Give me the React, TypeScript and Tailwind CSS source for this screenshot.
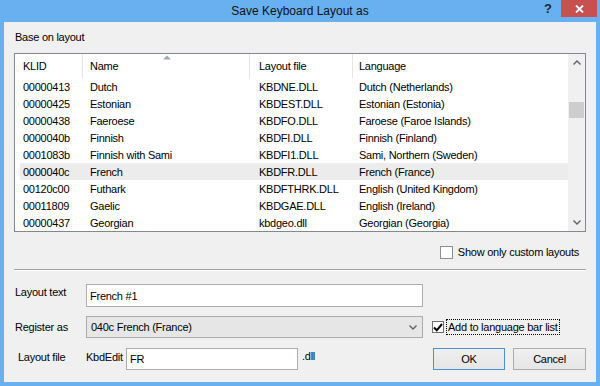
import React from "react";

const rows: [string, string, string, string][] = [
  ["00000413", "Dutch", "KBDNE.DLL", "Dutch (Netherlands)"],
  ["00000425", "Estonian", "KBDEST.DLL", "Estonian (Estonia)"],
  ["00000438", "Faeroese", "KBDFO.DLL", "Faroese (Faroe Islands)"],
  ["0000040b", "Finnish", "KBDFI.DLL", "Finnish (Finland)"],
  ["0001083b", "Finnish with Sami", "KBDFI1.DLL", "Sami, Northern (Sweden)"],
  ["0000040c", "French", "KBDFR.DLL", "French (France)"],
  ["00120c00", "Futhark", "KBDFTHRK.DLL", "English (United Kingdom)"],
  ["00011809", "Gaelic", "KBDGAE.DLL", "English (Ireland)"],
  ["00000437", "Georgian", "kbdgeo.dll", "Georgian (Georgia)"],
];

function Chevron({ up }: { up?: boolean }) {
  return (
    <svg width="8" height="5" viewBox="0 0 8 5">
      <polyline
        points={up ? "0.5,4.5 4,1 7.5,4.5" : "0.5,0.5 4,4 7.5,0.5"}
        fill="none"
        stroke="#606060"
        strokeWidth="1.4"
      />
    </svg>
  );
}

export default function App() {
  return (
    <div className="w-[600px] h-[386px] bg-[#68b0f0] flex flex-col font-['Liberation_Sans',Arial,sans-serif] text-black">
      {/* Title bar */}
      <div className="relative h-[22px] flex items-center justify-center text-[12px] text-[#111]">
        <span className="leading-[14px]">Save Keyboard Layout as</span>
        <div className="absolute right-[3px] top-0 flex items-start">
          <div className="w-[26px] h-[17px] flex items-center justify-center text-[13px] font-bold text-[#1a2a3a]">
            ?
          </div>
          <div className="w-[36px] h-[17px] bg-[#c75050] flex items-center justify-center">
            <svg width="9" height="8" viewBox="0 0 9 8">
              <path d="M1 0.5 L8 7.5 M8 0.5 L1 7.5" stroke="#fff" strokeWidth="1.8" />
            </svg>
          </div>
        </div>
      </div>

      {/* Client area */}
      <div className="flex-1 mx-[4px] mb-[4px] bg-[#f0f0f0] px-[10px] flex flex-col text-[11px] tracking-[-0.25px]">
        <div className="h-[31px] pt-[9px] pl-[1px] leading-[13px]">Base on layout</div>

        {/* List view */}
        <div className="h-[179px] border border-[#828790] bg-white flex">
          <div className="flex-1 flex flex-col overflow-hidden">
            <div className="h-[24px] flex items-center">
              <div className="w-[68px] h-full pl-[8px] flex items-center border-r border-[#e5e5e5]">KLID</div>
              <div className="relative w-[167px] h-full pl-[7px] flex items-center border-r border-[#e5e5e5]">
                Name
                <svg className="absolute left-[80px] top-[1px]" width="8" height="5" viewBox="0 0 8 5">
                  <polygon points="0,4.5 4,0.5 8,4.5" fill="#9aabbd" />
                </svg>
              </div>
              <div className="w-[103px] h-full pl-[9px] flex items-center border-r border-[#e5e5e5]">Layout file</div>
              <div className="flex-1 h-full pl-[6px] flex items-center">Language</div>
            </div>
            {rows.map((r, i) => (
              <div key={r[0]} className="h-[17px] flex pl-[5px]">
                <div
                  className={
                    "flex-1 flex items-center leading-[17px] pt-[1px] whitespace-nowrap " +
                    (i === 5 ? "bg-[#ececec]" : "")
                  }
                >
                  <div className="w-[63px] pl-[3px]">{r[0]}</div>
                  <div className="w-[167px] pl-[7px]">{r[1]}</div>
                  <div className="w-[103px] pl-[9px]">{r[2]}</div>
                  <div className="flex-1 pl-[6px]">{r[3]}</div>
                </div>
              </div>
            ))}
          </div>
          <div className="w-[17px] bg-[#f0f0f0] flex flex-col">
            <div className="h-[17px] flex items-center justify-center">
              <Chevron up />
            </div>
            <div className="flex-1 flex flex-col">
              <div className="mt-[31px] mx-[1px] h-[16px] bg-[#cdcdcd]" />
            </div>
            <div className="h-[17px] flex items-center justify-center">
              <Chevron />
            </div>
          </div>
        </div>

        {/* Show only custom layouts */}
        <div className="mt-[13px] h-[14px] flex items-center justify-end pr-[7px]">
          <div className="w-[13px] h-[13px] border border-[#8f8f8f] bg-white" />
          <span className="ml-[5px] leading-[13px]">Show only custom layouts</span>
        </div>

        {/* Separator */}
        <div className="mt-[10px] h-0 border-t border-b border-t-[#a0a0a0] border-b-white" />

        {/* Layout text */}
        <div className="mt-[13px] h-[23px] flex items-start">
          <div className="w-[72px] pl-[1px] mt-[2px] leading-[13px]">Layout text</div>
          <div className="w-[337px] h-[23px] border border-[#abadb3] bg-white pl-[3px] flex items-center pt-[1px]">
            French #1
          </div>
        </div>

        {/* Register as */}
        <div className="mt-[9px] h-[22px] flex items-start">
          <div className="w-[72px] pl-[1px] mt-[5px] leading-[13px]">Register as</div>
          <div className="w-[337px] h-[22px] border border-[#acacac] bg-[#e6e6e6] pl-[4px] pr-[5px] flex items-center justify-between">
            <span>040c French (France)</span>
            <Chevron />
          </div>
          <div className="ml-[9px] h-[22px] flex items-center">
            <div className="w-[12px] h-[12px] border border-[#707070] bg-white flex items-center justify-center">
              <svg width="10" height="9" viewBox="0 0 10 9">
                <polyline points="1,4.5 3.8,7.3 9,1" fill="none" stroke="#000" strokeWidth="2" />
              </svg>
            </div>
            <span className="ml-[2px] px-[1px] leading-[14px] border border-dotted border-black">
              Add to language bar list
            </span>
          </div>
        </div>

        {/* Layout file */}
        <div className="mt-[10px] h-[22px] flex items-start">
          <div className="w-[72px] pl-[4px] mt-[3px] leading-[13px]">Layout file</div>
          <div className="w-[40px] mt-[3px] leading-[13px]">KbdEdit</div>
          <div className="w-[172px] h-[22px] border border-[#abadb3] bg-white pl-[3px] flex items-center">FR</div>
          <div className="ml-[4px] mt-[2px] leading-[13px]">.dll</div>
          <div className="ml-auto flex gap-[8px]">
            <div className="w-[72px] h-[22px] border border-[#4a90d9] bg-gradient-to-b from-[#f0f0f0] to-[#e5e5e5] flex items-center justify-center">
              OK
            </div>
            <div className="w-[73px] h-[22px] border border-[#acacac] bg-gradient-to-b from-[#f0f0f0] to-[#e5e5e5] flex items-center justify-center">
              Cancel
            </div>
          </div>
        </div>
      </div>
    </div>
  );
}
